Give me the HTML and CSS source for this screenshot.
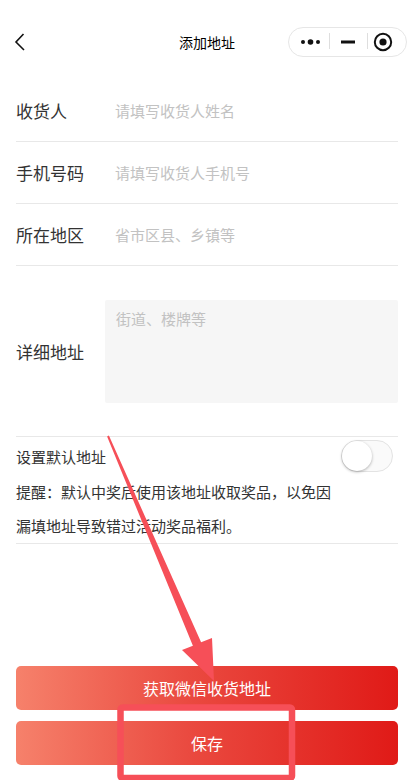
FILE: index.html
```html
<!DOCTYPE html>
<html lang="zh">
<head>
<meta charset="utf-8">
<title>添加地址</title>
<link rel="stylesheet" href="styles.css">
</head>
<body>
<div class="page">
  <header class="nav">
    <div class="nav-back">
      <svg width="14" height="20" viewBox="0 0 14 20"><polyline points="9.5,2 2,10 10,18" fill="none" stroke="#111" stroke-width="1.6" stroke-linejoin="miter"/></svg>
    </div>
    <div class="nav-title">添加地址</div>
    <div class="capsule">
      <svg width="117" height="28" viewBox="0 0 117 28">
        <circle cx="14" cy="14" r="2" fill="#111"/>
        <circle cx="21.5" cy="14" r="2.8" fill="#111"/>
        <circle cx="29" cy="14" r="2" fill="#111"/>
        <line x1="40.5" y1="5" x2="40.5" y2="21" stroke="#dedede" stroke-width="1"/>
        <line x1="52" y1="14" x2="66" y2="14" stroke="#111" stroke-width="3"/>
        <line x1="78.5" y1="5" x2="78.5" y2="21" stroke="#dedede" stroke-width="1"/>
        <circle cx="94" cy="14" r="8.2" fill="none" stroke="#111" stroke-width="2"/>
        <circle cx="94" cy="14" r="3.6" fill="#111"/>
      </svg>
    </div>
  </header>

  <main class="form">
    <div class="row">
      <div class="label">收货人</div>
      <div class="input placeholder">请填写收货人姓名</div>
    </div>
    <div class="row">
      <div class="label">手机号码</div>
      <div class="input placeholder">请填写收货人手机号</div>
    </div>
    <div class="row">
      <div class="label">所在地区</div>
      <div class="input placeholder">省市区县、乡镇等</div>
    </div>
    <div class="row row-detail">
      <div class="label">详细地址</div>
      <div class="textarea placeholder">街道、楼牌等</div>
    </div>
    <div class="default-block">
      <div class="default-row">
        <div class="default-label">设置默认地址</div>
        <div class="switch"><div class="knob"></div></div>
      </div>
      <p class="notice">提醒：默认中奖后使用该地址收取奖品，以免因漏填地址导致错过活动奖品福利。</p>
    </div>
  </main>

  <div class="spacer"></div>

  <footer class="actions">
    <button class="btn">获取微信收货地址</button>
    <button class="btn">保存</button>
  </footer>

  <svg class="annot" width="414" height="780" viewBox="0 0 414 780">
    <polygon points="108.9,435.6 201.1,642.2 212,638 214,681 182,650 192.9,645.8 107.1,436.4" fill="#f64f58"/>
    <rect x="120.5" y="707.5" width="171.5" height="70.5" rx="2" fill="none" stroke="#f64f58" stroke-width="6.5"/>
  </svg>
</div>
</body>
</html>
```

FILE: styles.css
```css
* { box-sizing: border-box; }
html, body { margin: 0; padding: 0; background: #fff; }
body {
  font-family: "Noto Sans CJK SC", "Noto Sans", sans-serif;
  color: #333;
}
.page {
  position: relative;
  width: 414px;
  height: 780px;
  display: flex;
  flex-direction: column;
  overflow: hidden;
}
.nav {
  position: relative;
  height: 44px;
  margin-top: 20px;
  display: flex;
  align-items: center;
  justify-content: space-between;
  padding: 0 7px 0 14px;
}
.nav-back { width: 20px; height: 20px; display: flex; align-items: center; }
.nav-title {
  position: absolute;
  left: 0; right: 0;
  text-align: center;
  font-size: 14px;
  color: #000;
  line-height: 44px;
  pointer-events: none;
}
.capsule {
  position: relative;
  width: 119px;
  height: 30px;
  border: 1px solid #e6e6e6;
  border-radius: 15px;
  background: #fff;
  display: flex;
}
.form {
  margin-top: 16px;
  padding: 0 16px;
}
.row {
  display: flex;
  align-items: center;
  height: 62px;
  border-bottom: 1px solid #e8e8e8;
}
.label {
  width: 89px;
  font-size: 17px;
  color: #333;
  flex-shrink: 0;
}
.input {
  margin-left: 10px;
  font-size: 15px;
}
.placeholder { color: #c2c2c2; }
.row-detail {
  height: 171px;
}
.textarea {
  flex: 1;
  height: 103px;
  background: #f6f6f6;
  border-radius: 2px;
  padding: 9px 11px;
  font-size: 15px;
  line-height: 20px;
}
.default-block {
  border-bottom: 1px solid #e8e8e8;
}
.default-row {
  height: 38px;
  display: flex;
  align-items: center;
  justify-content: space-between;
  padding-right: 5px;
}
.default-label { font-size: 15px; color: #333; }
.switch {
  width: 52px;
  height: 32px;
  border-radius: 16px;
  border: 1px solid #e3e3e3;
  background: #fafafa;
  position: relative;
}
.knob {
  position: absolute;
  left: 0; top: 0;
  width: 30px;
  height: 30px;
  border-radius: 50%;
  background: #fff;
  box-shadow: 0 1px 3px rgba(0,0,0,0.3);
}
.notice {
  margin: 0;
  width: 318px;
  font-size: 15px;
  line-height: 34px;
  color: #333;
}
.spacer { flex: 1; }
.actions {
  padding: 0 16px 15px;
  display: flex;
  flex-direction: column;
  gap: 11px;
}
.btn {
  height: 44px;
  border: none;
  border-radius: 5px;
  background: linear-gradient(90deg, #f6816b 0%, #ea4a40 45%, #e01a17 100%);
  color: #fff;
  font-family: "Noto Sans CJK SC", "Noto Sans", sans-serif;
  font-size: 16px;
  padding: 0;
}
.annot {
  position: absolute;
  left: 0; top: 0;
  pointer-events: none;
}
```
